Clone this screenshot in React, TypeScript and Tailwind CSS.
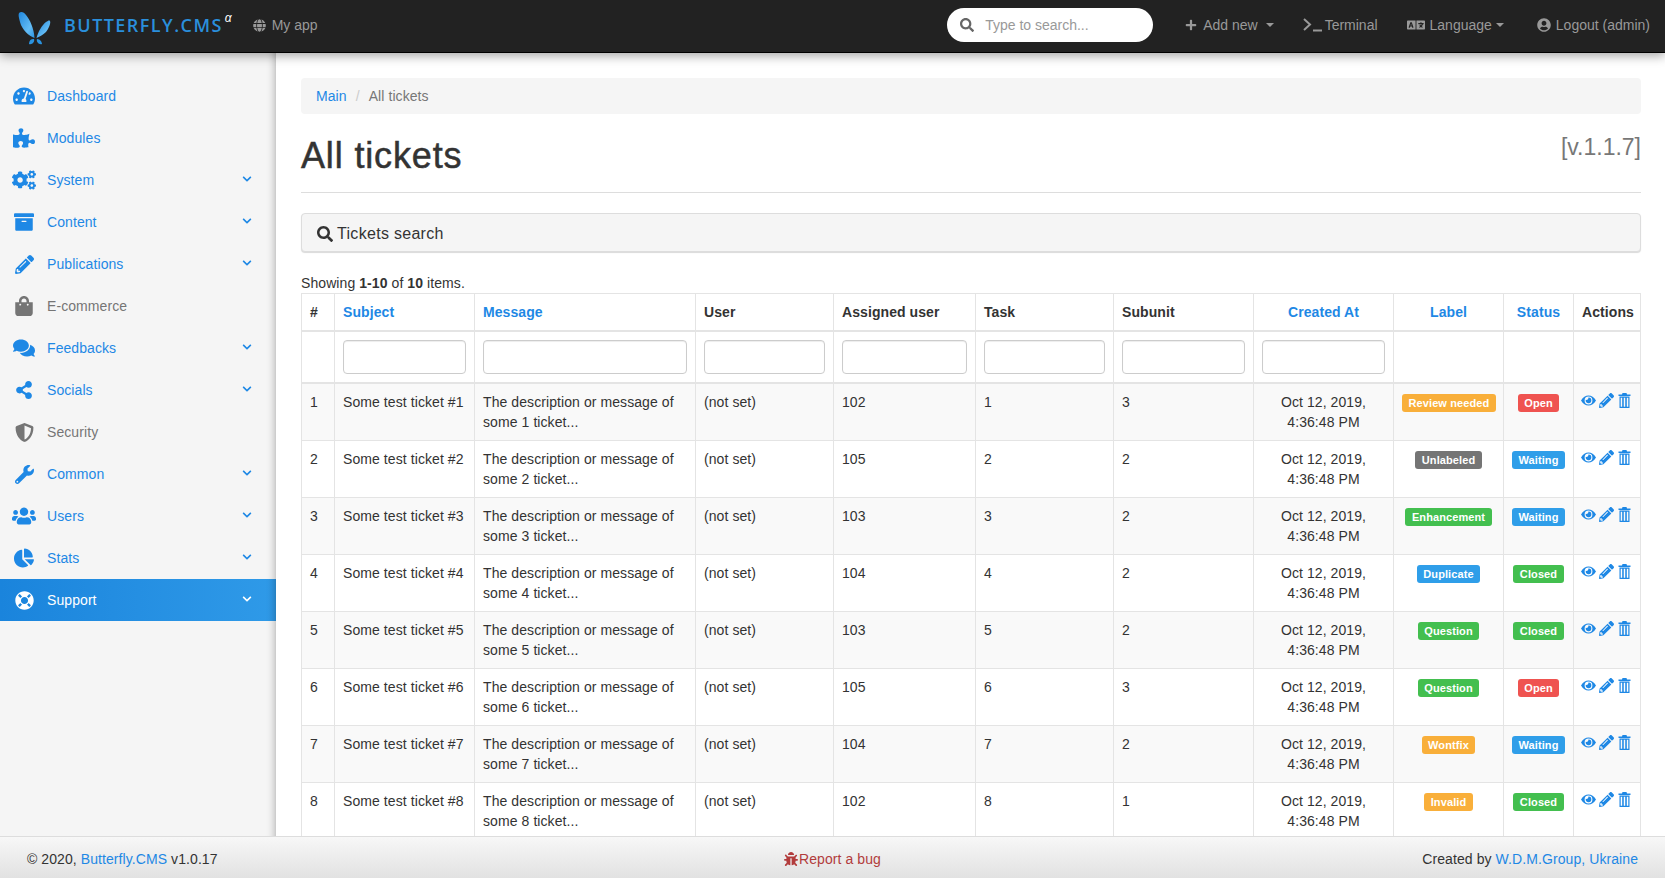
import {
  FaTachometerAlt, FaPuzzlePiece, FaCogs, FaArchive, FaPencilAlt, FaShoppingBag, FaComments, FaShareAlt,
  FaShieldAlt, FaWrench, FaUsers, FaChartPie, FaLifeRing, FaChevronDown, FaGlobe, FaSearch, FaPlus,
  FaUserCircle, FaBug, FaLanguage,
} from "react-icons/fa";

const sideItems = [
  { label: "Dashboard", icon: FaTachometerAlt, size: 22 },
  { label: "Modules", icon: FaPuzzlePiece, size: 22 },
  { label: "System", icon: FaCogs, size: 24, more: true },
  { label: "Content", icon: FaArchive, size: 20, more: true },
  { label: "Publications", icon: FaPencilAlt, size: 19, more: true },
  { label: "E-commerce", icon: FaShoppingBag, size: 20, muted: true },
  { label: "Feedbacks", icon: FaComments, size: 22, more: true },
  { label: "Socials", icon: FaShareAlt, size: 18, more: true },
  { label: "Security", icon: FaShieldAlt, size: 19, muted: true },
  { label: "Common", icon: FaWrench, size: 19, more: true },
  { label: "Users", icon: FaUsers, size: 24, more: true },
  { label: "Stats", icon: FaChartPie, size: 20, more: true },
  { label: "Support", icon: FaLifeRing, size: 19, more: true, active: true },
];

const orange = "bg-[#f9af3a]";
const red = "bg-[#ef5350]";
const blue = "bg-[#2f9ee9]";
const green = "bg-[#43bf4f]";
const tickets = [
  { user: 102, task: 1, sub: 3, label: "Review needed", labelColor: orange, status: "Open", statusColor: red },
  { user: 105, task: 2, sub: 2, label: "Unlabeled", labelColor: "bg-[#757575]", status: "Waiting", statusColor: blue },
  { user: 103, task: 3, sub: 2, label: "Enhancement", labelColor: green, status: "Waiting", statusColor: blue },
  { user: 104, task: 4, sub: 2, label: "Duplicate", labelColor: blue, status: "Closed", statusColor: green },
  { user: 103, task: 5, sub: 2, label: "Question", labelColor: green, status: "Closed", statusColor: green },
  { user: 105, task: 6, sub: 3, label: "Question", labelColor: green, status: "Open", statusColor: red },
  { user: 104, task: 7, sub: 2, label: "Wontfix", labelColor: orange, status: "Waiting", statusColor: blue },
  { user: 102, task: 8, sub: 1, label: "Invalid", labelColor: orange, status: "Closed", statusColor: green },
];

const th = "border border-[#e4e4e4] border-b-2 px-2 py-2 font-bold";
const td = "border border-[#e4e4e4] px-2 py-2 align-top";
const filterCell = "border border-[#e4e4e4] border-b-2 px-2 py-2";
const input = "block w-full h-[34px] rounded border border-[#ccc] bg-white shadow-[inset_0_1px_1px_rgba(0,0,0,0.075)]";
const badge = "mt-[2px] inline-block h-[18px] whitespace-nowrap rounded-[3px] px-[6.5px] align-top text-[11px] leading-[18px] font-bold tracking-[0.1px] text-white";

function Logo() {
  return (
    <svg width="36" height="42" viewBox="0 0 36 42" className="shrink-0">
      <defs>
        <linearGradient id="wing" x1="0" y1="0" x2="1" y2="1">
          <stop offset="0" stopColor="#1f86dc" />
          <stop offset="0.65" stopColor="#63bcf5" />
          <stop offset="1" stopColor="#2a93e0" />
        </linearGradient>
      </defs>
      <path d="M2 9 C4 7 7 8 9 11 C13 16 17 24 17.5 34 C12 32 5 26 3 18 C2 14 1 11 2 9 Z" fill="url(#wing)" />
      <path d="M33 17 C34 19 32 24 29 28 C26 31 22 33 19.5 34 C21 28 25 21 29 18 C31 17 32 16 33 17 Z" fill="url(#wing)" />
      <path d="M16 35 C13 35 12 38 12 40 C15 41 18 38 17 35 Z" fill="#2a93e0" />
      <path d="M20 35 C19 38 22 41 25 40 C25 38 23 35 20 35 Z" fill="#2a93e0" />
    </svg>
  );
}

function EyeIcon() {
  return (
    <svg width="15" height="15" viewBox="0 0 15 15" fill="currentColor">
      <path fillRule="evenodd" d="M0 7.5 C2 4 4.6 2.5 7.5 2.5 C10.4 2.5 13 4 15 7.5 C13 11 10.4 12.5 7.5 12.5 C4.6 12.5 2 11 0 7.5 Z M7.5 3.6 A3.9 3.9 0 1 0 7.5 11.4 A3.9 3.9 0 1 0 7.5 3.6 Z" />
      <path d="M4.8 6.8 A2.8 2.8 0 1 0 7.4 4.6 A2 2 0 0 1 4.8 6.8 Z" />
    </svg>
  );
}

function TrashIcon() {
  return (
    <svg width="13" height="15" viewBox="0 0 13 15" fill="currentColor">
      <path d="M4.5 0 H8.5 L9 1.5 H12.5 V3 H0.5 V1.5 H4 Z" />
      <path fillRule="evenodd" d="M1.5 3.5 H11.5 V15 H1.5 Z M2.7 4.7 V13.8 H4.2 V4.7 Z M5.75 4.7 V13.8 H7.25 V4.7 Z M8.8 4.7 V13.8 H10.3 V4.7 Z" />
    </svg>
  );
}

function TerminalIcon() {
  return (
    <svg width="20" height="14" viewBox="0 0 20 14" fill="none" stroke="currentColor" strokeWidth="2">
      <path d="M1 1 L7 6.5 L1 12" />
      <path d="M10 12.5 H19" />
    </svg>
  );
}

function Caret({ className = "ml-2" }: { className?: string }) {
  return <span className={`${className} inline-block border-x-4 border-t-4 border-x-transparent border-t-current`} />;
}

function Sidebar() {
  return (
    <aside className="w-[276px] shrink-0 bg-[#f5f5f5] pt-[22px] shadow-[inset_-10px_0_10px_-10px_rgba(0,0,0,0.35)]">
      {sideItems.map((item) => {
        const Icon = item.icon;
        const color = item.active ? "text-white" : item.muted ? "text-[#757575]" : "text-[#1e88e5]";
        return (
          <div
            key={item.label}
            className={`flex h-[42px] items-center ${color} ${item.active ? "bg-gradient-to-r from-[#1a84dc] to-[#2f9ae8] shadow-[inset_-10px_0_10px_-10px_rgba(0,0,0,0.35)]" : ""}`}
          >
            <span className="flex w-[47px] shrink-0 justify-center pl-[1px]">
              <Icon size={item.size} />
            </span>
            <span className="flex-1">{item.label}</span>
            {item.more && <FaChevronDown size={10} className="mr-[24px] mb-[3px]" />}
          </div>
        );
      })}
    </aside>
  );
}

export default function App() {
  return (
    <div className="flex h-screen flex-col overflow-hidden bg-white text-sm leading-5 tracking-[0.08px] text-[#333] font-['Liberation_Sans',Arial,sans-serif]">
      <nav className="relative z-10 flex h-[53px] shrink-0 items-center border-b border-black bg-[#222] pb-[2px] tracking-normal text-[#999] shadow-[0_3px_10px_rgba(0,0,0,0.35)]">
        <div className="ml-[17px] flex items-center">
          <Logo />
          <span className="ml-[11px] text-[18px] font-semibold tracking-[1.45px] text-[#2a8fdc] font-['Open_Sans',sans-serif]">BUTTERFLY.CMS</span>
          <span className="mb-[14px] ml-[2px] text-xs italic text-white">α</span>
        </div>
        <div className="ml-[21px] flex items-center gap-[6px]">
          <FaGlobe size={13} />
          <span>My app</span>
        </div>
        <div className="ml-auto flex h-[34px] w-[206px] items-center rounded-full bg-white pl-[13px] text-[#999]">
          <FaSearch size={14} className="text-[#666]" />
          <span className="ml-[11px]">Type to search...</span>
        </div>
        <div className="ml-[32px] flex items-center">
          <FaPlus size={12} />
          <span className="ml-[6px]">Add new</span>
          <Caret />
        </div>
        <div className="ml-[29px] flex items-center">
          <TerminalIcon />
          <span className="ml-[2px]">Terminal</span>
        </div>
        <div className="ml-[29px] flex items-center">
          <FaLanguage size={18} />
          <span className="ml-[5px]">Language</span>
          <Caret className="ml-1" />
        </div>
        <div className="ml-[33px] mr-[15px] flex items-center">
          <FaUserCircle size={14} />
          <span className="ml-[5px]">Logout (admin)</span>
        </div>
      </nav>

      <div className="flex min-h-0 flex-1">
        <Sidebar />
        <main className="ml-[1px] min-w-0 flex-1 overflow-hidden px-6 pt-[25px]">
          <div className="flex h-9 items-center rounded bg-[#f5f5f5] px-[15px]">
            <span className="text-[#1e88e5]">Main</span>
            <span className="px-[9px] text-[#ccc]">/</span>
            <span className="text-[#777]">All tickets</span>
          </div>

          <div className="mt-[20px] flex items-start justify-between border-b border-[#ddd] pb-[15px]">
            <h1 className="text-[36px] leading-[43px] font-normal tracking-[0.85px] [-webkit-text-stroke:0.5px_#333]">All tickets</h1>
            <span className="text-[23px] leading-[26px] tracking-normal text-[#777]">[v.1.1.7]</span>
          </div>

          <div className="mt-[20px] flex h-[39px] items-center rounded border border-[#ddd] bg-[#f5f5f5] px-[15px] pt-[2px] text-base tracking-[0.3px] shadow-[0_1px_1px_rgba(0,0,0,0.15)]">
            <FaSearch size={16} className="mr-[4px]" />
            Tickets search
          </div>

          <div className="mt-[21px] h-5 leading-5">
            Showing <b>1-10</b> of <b>10</b> items.
          </div>

          <table className="w-full table-fixed border-collapse">
            <colgroup>
              <col className="w-[33px]" />
              <col className="w-[140px]" />
              <col className="w-[221px]" />
              <col className="w-[138px]" />
              <col className="w-[142px]" />
              <col className="w-[138px]" />
              <col className="w-[140px]" />
              <col className="w-[140px]" />
              <col className="w-[110px]" />
              <col className="w-[70px]" />
              <col />
            </colgroup>
            <thead>
              <tr>
                <th className={`${th} text-left`}>#</th>
                <th className={`${th} text-left text-[#1e88e5]`}>Subject</th>
                <th className={`${th} text-left text-[#1e88e5]`}>Message</th>
                <th className={`${th} text-left`}>User</th>
                <th className={`${th} text-left`}>Assigned user</th>
                <th className={`${th} text-left`}>Task</th>
                <th className={`${th} text-left`}>Subunit</th>
                <th className={`${th} text-center text-[#1e88e5]`}>Created At</th>
                <th className={`${th} text-center text-[#1e88e5]`}>Label</th>
                <th className={`${th} text-center text-[#1e88e5]`}>Status</th>
                <th className={`${th} whitespace-nowrap text-left`}>Actions</th>
              </tr>
              <tr>
                <td className={filterCell} />
                {[0, 1, 2, 3, 4, 5, 6].map((i) => (
                  <td key={i} className={filterCell}>
                    <div className={input} />
                  </td>
                ))}
                <td className={filterCell} />
                <td className={filterCell} />
                <td className={filterCell} />
              </tr>
            </thead>
            <tbody>
              {tickets.map((t, i) => (
                <tr key={i} className={i % 2 === 0 ? "bg-[#f9f9f9]" : "bg-white"}>
                  <td className={td}>{i + 1}</td>
                  <td className={`${td} whitespace-nowrap`}>Some test ticket #{i + 1}</td>
                  <td className={td}>The description or message of some {i + 1} ticket...</td>
                  <td className={td}>(not set)</td>
                  <td className={td}>{t.user}</td>
                  <td className={td}>{t.task}</td>
                  <td className={td}>{t.sub}</td>
                  <td className={`${td} text-center`}>Oct 12, 2019, 4:36:48 PM</td>
                  <td className={`${td} text-center`}>
                    <span className={`${badge} ${t.labelColor}`}>{t.label}</span>
                  </td>
                  <td className={`${td} text-center`}>
                    <span className={`${badge} ${t.statusColor}`}>{t.status}</span>
                  </td>
                  <td className={td}>
                    <div className="-ml-[1px] mt-[1px] flex items-start gap-[3px] text-[#1e88e5]">
                      <EyeIcon />
                      <FaPencilAlt size={15} />
                      <span className="ml-[1px]"><TrashIcon /></span>
                    </div>
                  </td>
                </tr>
              ))}
            </tbody>
          </table>
        </main>
      </div>

      <footer className="relative z-10 flex h-[42px] shrink-0 items-center justify-between border-t border-[#ddd] bg-gradient-to-b from-[#f7f7f7] to-[#e2e2e2] pt-[2px] pr-[27px] pl-[27px]">
        <div className="w-[500px]">
          © 2020, <span className="text-[#1e88e5]">Butterfly.CMS</span> v1.0.17
        </div>
        <div className="flex items-center text-[#b23c3c]">
          <FaBug size={14} className="mr-[1px]" />
          Report a bug
        </div>
        <div className="w-[500px] text-right">
          Created by <span className="text-[#1e88e5]">W.D.M.Group, Ukraine</span>
        </div>
      </footer>
    </div>
  );
}
